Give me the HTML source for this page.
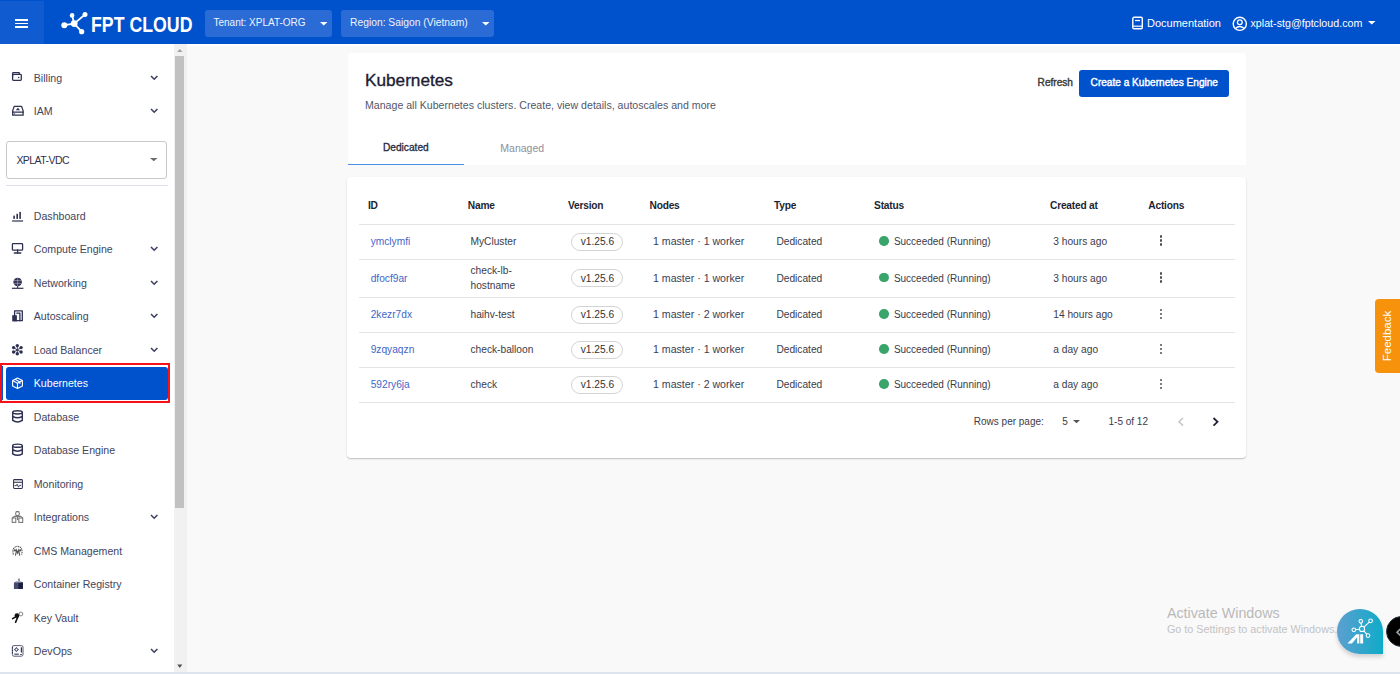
<!DOCTYPE html>
<html><head><meta charset="utf-8">
<style>
*{box-sizing:border-box;margin:0;padding:0}
html,body{width:1400px;height:674px;overflow:hidden;background:#f9f9fa;font-family:"Liberation Sans",sans-serif;position:relative}
.t{position:absolute;line-height:1;white-space:nowrap}
.a{position:absolute}
svg{position:absolute;overflow:visible}
</style></head><body>

<div class="a" style="left:0;top:0;width:1400px;height:44px;background:#0051cc"></div>
<div class="a" style="left:0;top:1px;width:44px;height:43px;background:#115bd0"></div>
<div class="a" style="left:15.1px;top:19.1px;width:13.4px;height:1.45px;background:#fff"></div>
<div class="a" style="left:15.1px;top:22.7px;width:13.4px;height:1.45px;background:#fff"></div>
<div class="a" style="left:15.1px;top:26.3px;width:13.4px;height:1.45px;background:#fff"></div>
<svg style="left:0;top:0" width="100" height="44"><g fill="#fff" stroke="#fff" stroke-width="1.8">
<line x1="74.2" y1="23.6" x2="64.3" y2="25.2"/><line x1="74.2" y1="23.6" x2="72.1" y2="15.4"/>
<line x1="74.2" y1="23.6" x2="85" y2="14.5"/><line x1="74.2" y1="23.6" x2="81.7" y2="31.7"/>
<circle cx="74.2" cy="23.6" r="3.4" stroke="none"/><circle cx="64.3" cy="25.2" r="3" stroke="none"/>
<circle cx="72.1" cy="15.4" r="2.3" stroke="none"/><circle cx="85" cy="14.5" r="2.5" stroke="none"/>
<circle cx="81.7" cy="31.7" r="2.6" stroke="none"/></g></svg>
<div class="t" style="left:90.8px;top:15px;font-size:21.5px;color:#fff;font-weight:bold;transform:scaleX(0.825);transform-origin:0 0;letter-spacing:0">FPT CLOUD</div>
<div class="a" style="left:204.5px;top:9.5px;width:127.5px;height:27.3px;background:#2b6bd6;border-radius:3px"></div>
<div class="t" style="left:213.5px;top:18px;font-size:10px;color:#eef3fc;font-weight:normal;">Tenant: XPLAT-ORG</div>
<svg style="left:319.5px;top:21.5px" width="8" height="4"><path d="M0 0 L7.5 0 L3.75 3.6Z" fill="#fff"/></svg>
<div class="a" style="left:341px;top:9.5px;width:152.5px;height:27.3px;background:#2b6bd6;border-radius:3px"></div>
<div class="t" style="left:350px;top:18px;font-size:10.3px;color:#eef3fc;font-weight:normal;">Region: Saigon (Vietnam)</div>
<svg style="left:481.5px;top:21.5px" width="8" height="4"><path d="M0 0 L7.5 0 L3.75 3.6Z" fill="#fff"/></svg>
<svg style="left:1131px;top:16px" width="14" height="14"><rect x="1.8" y="1.3" width="9.5" height="11.5" rx="1.3" fill="none" stroke="#fff" stroke-width="1.4"/><line x1="4" y1="4.5" x2="9" y2="4.5" stroke="#fff" stroke-width="1.3"/><line x1="1.8" y1="10.2" x2="11.3" y2="10.2" stroke="#fff" stroke-width="1.2"/></svg>
<div class="t" style="left:1147px;top:18px;font-size:11px;color:#fff;font-weight:normal;">Documentation</div>
<svg style="left:1232px;top:15.5px" width="16" height="16"><circle cx="7.8" cy="7.8" r="6.6" fill="none" stroke="#fff" stroke-width="1.4"/><circle cx="7.8" cy="6.2" r="2.4" fill="none" stroke="#fff" stroke-width="1.3"/><path d="M3.6 12.3 Q7.8 8.6 12 12.3" fill="none" stroke="#fff" stroke-width="1.3"/></svg>
<div class="t" style="left:1250.5px;top:18px;font-size:10.7px;color:#fff;font-weight:normal;">xplat-stg@fptcloud.com</div>
<svg style="left:1368px;top:21.3px" width="8" height="4"><path d="M0 0 L7.5 0 L3.75 3.6Z" fill="#fff"/></svg>
<div class="a" style="left:0;top:44px;width:174px;height:630px;background:#fff"></div>
<div class="a" style="left:173.5px;top:44px;width:13.3px;height:630px;background:#f1f1f1"></div>
<div class="a" style="left:175.2px;top:56px;width:9px;height:452px;background:#c1c1c1"></div>
<svg style="left:176px;top:48px" width="8" height="5"><path d="M1 4 L6.6 4 L3.8 1Z" fill="#a3a3a3"/></svg>
<svg style="left:176px;top:663.5px" width="8" height="5"><path d="M1.3 0.5 L6.3 0.5 L3.8 4Z" fill="#505050"/></svg>
<div class="t" style="left:33.8px;top:73px;font-size:10.6px;color:#42455e;font-weight:normal;">Billing</div>
<svg style="left:150.3px;top:74.7px" width="9" height="6"><path d="M1 1 L4.2 4.2 L7.4 1" fill="none" stroke="#3b3e60" stroke-width="1.55"/></svg>
<div class="t" style="left:33.8px;top:106px;font-size:10.6px;color:#42455e;font-weight:normal;">IAM</div>
<svg style="left:150.3px;top:107.9px" width="9" height="6"><path d="M1 1 L4.2 4.2 L7.4 1" fill="none" stroke="#3b3e60" stroke-width="1.55"/></svg>
<div class="a" style="left:6.4px;top:140.6px;width:161px;height:38px;border:1px solid #c9c9c9;border-radius:3px;background:#fff"></div>
<div class="t" style="left:16.4px;top:155px;font-size:10.5px;color:#2e3148;font-weight:normal;letter-spacing:-0.55px">XPLAT-VDC</div>
<svg style="left:150px;top:158px" width="8" height="4"><path d="M0 0 L7.5 0 L3.75 3.2Z" fill="#6b6b6b"/></svg>
<div class="a" style="left:6.4px;top:185px;width:162px;height:1px;background:#dfe0ec"></div>
<div class="t" style="left:33.8px;top:211px;font-size:10.6px;color:#42455e;font-weight:normal;">Dashboard</div>
<div class="t" style="left:33.8px;top:244px;font-size:10.6px;color:#42455e;font-weight:normal;">Compute Engine</div>
<svg style="left:150.3px;top:246.1px" width="9" height="6"><path d="M1 1 L4.2 4.2 L7.4 1" fill="none" stroke="#3b3e60" stroke-width="1.55"/></svg>
<div class="t" style="left:33.8px;top:278px;font-size:10.6px;color:#42455e;font-weight:normal;">Networking</div>
<svg style="left:150.3px;top:279.59999999999997px" width="9" height="6"><path d="M1 1 L4.2 4.2 L7.4 1" fill="none" stroke="#3b3e60" stroke-width="1.55"/></svg>
<div class="t" style="left:33.8px;top:311px;font-size:10.6px;color:#42455e;font-weight:normal;">Autoscaling</div>
<svg style="left:150.3px;top:313.09999999999997px" width="9" height="6"><path d="M1 1 L4.2 4.2 L7.4 1" fill="none" stroke="#3b3e60" stroke-width="1.55"/></svg>
<div class="t" style="left:33.8px;top:345px;font-size:10.6px;color:#42455e;font-weight:normal;">Load Balancer</div>
<svg style="left:150.3px;top:346.59999999999997px" width="9" height="6"><path d="M1 1 L4.2 4.2 L7.4 1" fill="none" stroke="#3b3e60" stroke-width="1.55"/></svg>
<div class="a" style="left:0;top:363px;width:170px;height:40px;border:2px solid #f5121a"></div>
<div class="a" style="left:6px;top:366.5px;width:162px;height:33.5px;background:#0051cc;border-radius:3px"></div>
<div class="a" style="left:2px;top:366px;width:1px;height:34px;background:#0051cc"></div>
<div class="t" style="left:33.8px;top:378px;font-size:10.6px;color:#fff;font-weight:normal;">Kubernetes</div>
<div class="t" style="left:33.8px;top:412px;font-size:10.6px;color:#42455e;font-weight:normal;">Database</div>
<div class="t" style="left:33.8px;top:445px;font-size:10.6px;color:#42455e;font-weight:normal;">Database Engine</div>
<div class="t" style="left:33.8px;top:479px;font-size:10.6px;color:#42455e;font-weight:normal;">Monitoring</div>
<div class="t" style="left:33.8px;top:512px;font-size:10.6px;color:#42455e;font-weight:normal;">Integrations</div>
<svg style="left:150.3px;top:514.1px" width="9" height="6"><path d="M1 1 L4.2 4.2 L7.4 1" fill="none" stroke="#3b3e60" stroke-width="1.55"/></svg>
<div class="t" style="left:33.8px;top:546px;font-size:10.6px;color:#42455e;font-weight:normal;">CMS Management</div>
<div class="t" style="left:33.8px;top:579px;font-size:10.6px;color:#42455e;font-weight:normal;">Container Registry</div>
<div class="t" style="left:33.8px;top:613px;font-size:10.6px;color:#42455e;font-weight:normal;">Key Vault</div>
<div class="t" style="left:33.8px;top:646px;font-size:10.6px;color:#42455e;font-weight:normal;">DevOps</div>
<svg style="left:150.3px;top:648.1px" width="9" height="6"><path d="M1 1 L4.2 4.2 L7.4 1" fill="none" stroke="#3b3e60" stroke-width="1.55"/></svg>
<svg style="left:0;top:0" width="174" height="674"><g fill="none" stroke="#2e3152" stroke-width="1.3" stroke-linejoin="round" stroke-linecap="round">
<rect x="12.6" y="74.4" width="8.7" height="6" rx="0.8"/>
<path d="M12.6 76.2 V73.4 Q12.6 72.6 13.4 72.6 H19.2 V74.4"/>
<path d="M12.7 115.2 V110.6 L14.2 106.4 H21.6 L23.1 110.6 V115.2Z"/><line x1="12.7" y1="112.2" x2="23.1" y2="112.2"/>
<rect x="12.4" y="243.6" width="10.2" height="6.6" rx="0.8"/><line x1="14.3" y1="253" x2="20.8" y2="253"/><line x1="17.6" y1="250" x2="17.6" y2="253"/>
<rect x="14.6" y="310.8" width="7.7" height="9.9"/><path d="M16.8 313.2 H19.9 V320.7"/>
<rect x="13.6" y="479.6" width="8.8" height="8.8" rx="0.8" stroke-width="1.05"/><line x1="13.6" y1="482.3" x2="22.4" y2="482.3" stroke-width="1"/><line x1="14.8" y1="480.9" x2="21.2" y2="480.9" stroke-width="0.9" stroke="#b4b6c4"/><path d="M15 485.6 H16.4 L17.1 484.2 L18.5 487.2 L19.4 485.4 H20.8" stroke-width="0.9"/>
<path d="M12.6 380.6 L17.5 378 L22.4 380.6 V385.9 L17.5 388.5 L12.6 385.9Z M12.6 380.6 L17.5 383.2 L22.4 380.6 M17.5 383.2 V388.5 M15 379.3 L19.9 381.9 V383.5" stroke="#fff" stroke-width="1.15"/>
</g>
<g fill="#2e3152" stroke="none">
<circle cx="18.7" cy="77.4" r="0.75"/>
<path d="M15.8 110.2 L17.9 107.8 L20 110.2Z"/><circle cx="14.6" cy="113.8" r="0.6"/>
<rect x="13.3" y="215.6" width="1.6" height="3.3"/><rect x="16.4" y="213.8" width="1.6" height="5.1"/><rect x="19.3" y="211.9" width="1.6" height="7"/><rect x="12.1" y="220.4" width="11" height="1.2"/>
<circle cx="17.65" cy="282" r="4.3"/><rect x="17.1" y="286" width="1.1" height="2.2"/><g stroke="#fff" stroke-width="0.45" fill="none" opacity="0.85"><line x1="13.6" y1="280.6" x2="21.7" y2="280.6"/><line x1="13.6" y1="283.4" x2="21.7" y2="283.4"/><line x1="17.65" y1="277.9" x2="17.65" y2="286.1"/></g><rect x="11.9" y="287.7" width="11.5" height="1.2"/>
<rect x="12.2" y="315.2" width="4.7" height="6.2"/>
<g stroke="#2e3152" stroke-width="0.9"><line x1="17.3" y1="350" x2="17.3" y2="345.4"/><line x1="17.3" y1="350" x2="13.8" y2="347.7"/><line x1="17.3" y1="350" x2="21.1" y2="347.7"/><line x1="17.3" y1="350" x2="13.8" y2="352"/><line x1="17.3" y1="350" x2="21.1" y2="352"/><line x1="17.3" y1="350" x2="17.3" y2="353.7"/></g>
<circle cx="17.3" cy="345.6" r="1.7"/><circle cx="13.6" cy="347.6" r="1.7"/><circle cx="21.1" cy="347.6" r="1.7"/><circle cx="13.6" cy="352" r="1.7"/><circle cx="21.1" cy="352" r="1.7"/><circle cx="17.3" cy="353.8" r="1.7"/>
<path d="M13.9 588.9 V582.8 L16.2 581.5 H20.6 L22.9 582.8 V588.9Z" fill="#474b6d"/><path d="M18.4 582.3 H22.9 V588.9 H18.4Z" fill="#1b1e42"/><rect x="18.1" y="578.5" width="1.8" height="2.6" fill="#8a8ca4"/><line x1="15.5" y1="582" x2="21.4" y2="582" stroke="#c9cad6" stroke-width="0.8"/>
</g>
<g fill="none" stroke="#2e3152" stroke-width="1.45">
<ellipse cx="17.5" cy="412.3" rx="4.8" ry="1.6"/><path d="M12.7 412.3 V420.4 Q17.5 423.5 22.3 420.4 V412.3 M12.7 416.3 Q17.5 419.4 22.3 416.3"/>
<ellipse cx="17.5" cy="445.7" rx="4.8" ry="1.6"/><path d="M12.7 445.7 V453.8 Q17.5 456.9 22.3 453.8 V445.7 M12.7 449.7 Q17.5 452.8 22.3 449.7"/>
</g>
<g fill="none" stroke="#7a7a7a" stroke-width="1.1">
<path d="M15.6 513.6 L16.3 511.6 H18.7 L19.4 513.6 L18.8 515.6 H16.2Z"/><rect x="12.2" y="518" width="3.6" height="4.4"/><rect x="18.8" y="518" width="3.9" height="4.4"/><path d="M12.2 518 L14.5 516.4 H20.5 L22.7 518"/><line x1="17.5" y1="516.4" x2="17.5" y2="520"/>
</g>
<g fill="none" stroke="#555" stroke-width="1.1">
<path d="M13.4 554.6 Q12 549.4 14.6 547.4 Q17.5 545.2 20.4 547.4 Q23 549.4 21.6 554.6" stroke-dasharray="1.3 0.6"/><path d="M15.4 555.6 L16.6 550.2 L17.6 553 L18.6 550.2 L19.8 555.6"/><circle cx="14.9" cy="550.4" r="0.6" fill="#555"/><circle cx="20.2" cy="550.4" r="0.6" fill="#555"/>
</g>
<g fill="#111" stroke="#111">
<circle cx="17" cy="615.6" r="2.4" stroke="none"/><circle cx="20.9" cy="614" r="1.9" fill="none" stroke="#777" stroke-width="0.9"/>
<line x1="16" y1="616.8" x2="12.6" y2="618.6" stroke-width="1.6" stroke-linecap="round"/><line x1="17.6" y1="617.4" x2="15.6" y2="622.2" stroke-width="1.6" stroke-linecap="round"/>
</g>
<g fill="none" stroke="#5a5d78" stroke-width="1"><rect x="12.4" y="645.6" width="10.6" height="10.6" rx="1.6"/></g>
<g fill="#2e3152" stroke="none">
<rect x="11.9" y="647.2" width="1.1" height="1.3"/><rect x="11.9" y="649.8" width="1.1" height="1.3"/><rect x="11.9" y="652" width="1.1" height="1.3"/>
<rect x="20.8" y="647.3" width="1.2" height="5.2"/><rect x="14.3" y="653.6" width="4.5" height="1.1"/><rect x="20.2" y="654" width="1.7" height="0.9"/>
</g>
<g fill="none" stroke="#2e3152" stroke-width="1"><circle cx="16.4" cy="649.6" r="1.4"/><path d="M16.4 647.2 V647.9 M16.4 651.3 V652 M14 649.6 H14.7 M18.1 649.6 H18.8" stroke-width="0.9"/></g>
</svg>
<div class="a" style="left:187px;top:44px;width:1213px;height:1.5px;background:#fff"></div>
<div class="a" style="left:347.5px;top:52.5px;width:898.5px;height:112.5px;background:#fff;border-radius:4px 4px 0 0"></div>
<div class="t" style="left:365px;top:72px;font-size:17.2px;color:#1b1d33;font-weight:normal;-webkit-text-stroke:0.35px #1b1d33">Kubernetes</div>
<div class="t" style="left:365px;top:100px;font-size:10.6px;color:#535669;font-weight:normal;">Manage all Kubernetes clusters. Create, view details, autoscales and more</div>
<div class="t" style="left:382.9px;top:143px;font-size:10.2px;color:#262a40;font-weight:normal;-webkit-text-stroke:0.3px #262a40">Dedicated</div>
<div class="t" style="left:500.3px;top:143px;font-size:10.5px;color:#8d8f9c;font-weight:normal;">Managed</div>
<div class="a" style="left:347.7px;top:163.6px;width:116px;height:1.8px;background:#4b8fe8"></div>
<div class="t" style="left:1037.6px;top:78px;font-size:10.1px;color:#3a3a3a;font-weight:normal;-webkit-text-stroke:0.4px #3a3a3a">Refresh</div>
<div class="a" style="left:1079px;top:70px;width:150px;height:27px;background:#0051cc;border-radius:3px"></div>
<div class="t" style="left:1090.6px;top:78px;font-size:10.1px;color:#fff;font-weight:normal;-webkit-text-stroke:0.4px #fff">Create a Kubernetes Engine</div>
<div class="a" style="left:347px;top:177px;width:899px;height:281px;background:#fff;border-radius:4px;box-shadow:0 1px 1.5px rgba(0,0,0,.24)"></div>
<div class="t" style="left:367.9px;top:201px;font-size:10.2px;color:#1d1f33;font-weight:bold;letter-spacing:-0.22px">ID</div>
<div class="t" style="left:467.8px;top:201px;font-size:10.2px;color:#1d1f33;font-weight:bold;letter-spacing:-0.22px">Name</div>
<div class="t" style="left:568px;top:201px;font-size:10.2px;color:#1d1f33;font-weight:bold;letter-spacing:-0.22px">Version</div>
<div class="t" style="left:649.5px;top:201px;font-size:10.2px;color:#1d1f33;font-weight:bold;letter-spacing:-0.22px">Nodes</div>
<div class="t" style="left:774px;top:201px;font-size:10.2px;color:#1d1f33;font-weight:bold;letter-spacing:-0.22px">Type</div>
<div class="t" style="left:874.1px;top:201px;font-size:10.2px;color:#1d1f33;font-weight:bold;letter-spacing:-0.22px">Status</div>
<div class="t" style="left:1050px;top:201px;font-size:10.2px;color:#1d1f33;font-weight:bold;letter-spacing:-0.22px">Created at</div>
<div class="t" style="left:1148.3px;top:201px;font-size:10.2px;color:#1d1f33;font-weight:bold;letter-spacing:-0.22px">Actions</div>
<div class="a" style="left:359px;top:223.5px;width:876px;height:1px;background:#e4e4e4"></div>
<div class="a" style="left:359px;top:258.5px;width:876px;height:1px;background:#e4e4e4"></div>
<div class="a" style="left:359px;top:297.0px;width:876px;height:1px;background:#e4e4e4"></div>
<div class="a" style="left:359px;top:332.0px;width:876px;height:1px;background:#e4e4e4"></div>
<div class="a" style="left:359px;top:367.0px;width:876px;height:1px;background:#e4e4e4"></div>
<div class="a" style="left:359px;top:401.8px;width:876px;height:1px;background:#e4e4e4"></div>
<div class="t" style="left:370.7px;top:237px;font-size:10.2px;color:#3f66c9;font-weight:normal;">ymclymfi</div>
<div class="t" style="left:470.5px;top:237px;font-size:10.2px;color:#3a3c4a;font-weight:normal;">MyCluster</div>
<div class="a" style="left:571px;top:232.5px;width:52px;height:18px;border:1px solid #d4d4d4;border-radius:9px;background:#fff"></div>
<div class="t" style="left:580.7px;top:237px;font-size:10.2px;color:#333;font-weight:normal;">v1.25.6</div>
<div class="t" style="left:653px;top:236px;font-size:10.6px;color:#3b3e55;font-weight:normal;">1 master · 1 worker</div>
<div class="t" style="left:776.4px;top:237px;font-size:10.2px;color:#3a3c4a;font-weight:normal;">Dedicated</div>
<div class="a" style="left:879px;top:236.3px;width:9.5px;height:9.5px;border-radius:50%;background:#3aa56b"></div>
<div class="t" style="left:893.9px;top:237px;font-size:10px;color:#3a3c4a;font-weight:normal;">Succeeded (Running)</div>
<div class="t" style="left:1053.3px;top:237px;font-size:10.2px;color:#3a3c4a;font-weight:normal;">3 hours ago</div>
<div class="a" style="left:1159.5px;top:235.4px;width:2.8px;height:2.8px;border-radius:50%;background:#505050"></div>
<div class="a" style="left:1159.5px;top:239.4px;width:2.8px;height:2.8px;border-radius:50%;background:#505050"></div>
<div class="a" style="left:1159.5px;top:243.4px;width:2.8px;height:2.8px;border-radius:50%;background:#505050"></div>
<div class="t" style="left:370.7px;top:274px;font-size:10.2px;color:#3f66c9;font-weight:normal;">dfocf9ar</div>
<div class="t" style="left:470.5px;top:266px;font-size:10.2px;color:#3a3c4a;font-weight:normal;">check-lb-</div>
<div class="t" style="left:470.5px;top:281px;font-size:10.2px;color:#3a3c4a;font-weight:normal;">hostname</div>
<div class="a" style="left:571px;top:269.1px;width:52px;height:18px;border:1px solid #d4d4d4;border-radius:9px;background:#fff"></div>
<div class="t" style="left:580.7px;top:274px;font-size:10.2px;color:#333;font-weight:normal;">v1.25.6</div>
<div class="t" style="left:653px;top:273px;font-size:10.6px;color:#3b3e55;font-weight:normal;">1 master · 1 worker</div>
<div class="t" style="left:776.4px;top:274px;font-size:10.2px;color:#3a3c4a;font-weight:normal;">Dedicated</div>
<div class="a" style="left:879px;top:272.9px;width:9.5px;height:9.5px;border-radius:50%;background:#3aa56b"></div>
<div class="t" style="left:893.9px;top:274px;font-size:10px;color:#3a3c4a;font-weight:normal;">Succeeded (Running)</div>
<div class="t" style="left:1053.3px;top:274px;font-size:10.2px;color:#3a3c4a;font-weight:normal;">3 hours ago</div>
<div class="a" style="left:1159.5px;top:272.0px;width:2.8px;height:2.8px;border-radius:50%;background:#505050"></div>
<div class="a" style="left:1159.5px;top:276.0px;width:2.8px;height:2.8px;border-radius:50%;background:#505050"></div>
<div class="a" style="left:1159.5px;top:280.0px;width:2.8px;height:2.8px;border-radius:50%;background:#505050"></div>
<div class="t" style="left:370.7px;top:310px;font-size:10.2px;color:#3f66c9;font-weight:normal;">2kezr7dx</div>
<div class="t" style="left:470.5px;top:310px;font-size:10.2px;color:#3a3c4a;font-weight:normal;">haihv-test</div>
<div class="a" style="left:571px;top:305.6px;width:52px;height:18px;border:1px solid #d4d4d4;border-radius:9px;background:#fff"></div>
<div class="t" style="left:580.7px;top:310px;font-size:10.2px;color:#333;font-weight:normal;">v1.25.6</div>
<div class="t" style="left:653px;top:309px;font-size:10.6px;color:#3b3e55;font-weight:normal;">1 master · 2 worker</div>
<div class="t" style="left:776.4px;top:310px;font-size:10.2px;color:#3a3c4a;font-weight:normal;">Dedicated</div>
<div class="a" style="left:879px;top:309.4px;width:9.5px;height:9.5px;border-radius:50%;background:#3aa56b"></div>
<div class="t" style="left:893.9px;top:310px;font-size:10px;color:#3a3c4a;font-weight:normal;">Succeeded (Running)</div>
<div class="t" style="left:1053.3px;top:310px;font-size:10.2px;color:#3a3c4a;font-weight:normal;">14 hours ago</div>
<div class="a" style="left:1159.5px;top:308.5px;width:2.8px;height:2.8px;border-radius:50%;background:#505050"></div>
<div class="a" style="left:1159.5px;top:312.5px;width:2.8px;height:2.8px;border-radius:50%;background:#505050"></div>
<div class="a" style="left:1159.5px;top:316.5px;width:2.8px;height:2.8px;border-radius:50%;background:#505050"></div>
<div class="t" style="left:370.7px;top:345px;font-size:10.2px;color:#3f66c9;font-weight:normal;">9zqyaqzn</div>
<div class="t" style="left:470.5px;top:345px;font-size:10.2px;color:#3a3c4a;font-weight:normal;">check-balloon</div>
<div class="a" style="left:571px;top:340.6px;width:52px;height:18px;border:1px solid #d4d4d4;border-radius:9px;background:#fff"></div>
<div class="t" style="left:580.7px;top:345px;font-size:10.2px;color:#333;font-weight:normal;">v1.25.6</div>
<div class="t" style="left:653px;top:344px;font-size:10.6px;color:#3b3e55;font-weight:normal;">1 master · 1 worker</div>
<div class="t" style="left:776.4px;top:345px;font-size:10.2px;color:#3a3c4a;font-weight:normal;">Dedicated</div>
<div class="a" style="left:879px;top:344.4px;width:9.5px;height:9.5px;border-radius:50%;background:#3aa56b"></div>
<div class="t" style="left:893.9px;top:345px;font-size:10px;color:#3a3c4a;font-weight:normal;">Succeeded (Running)</div>
<div class="t" style="left:1053.3px;top:345px;font-size:10.2px;color:#3a3c4a;font-weight:normal;">a day ago</div>
<div class="a" style="left:1159.5px;top:343.5px;width:2.8px;height:2.8px;border-radius:50%;background:#505050"></div>
<div class="a" style="left:1159.5px;top:347.5px;width:2.8px;height:2.8px;border-radius:50%;background:#505050"></div>
<div class="a" style="left:1159.5px;top:351.5px;width:2.8px;height:2.8px;border-radius:50%;background:#505050"></div>
<div class="t" style="left:370.7px;top:380px;font-size:10.2px;color:#3f66c9;font-weight:normal;">592ry6ja</div>
<div class="t" style="left:470.5px;top:380px;font-size:10.2px;color:#3a3c4a;font-weight:normal;">check</div>
<div class="a" style="left:571px;top:375.6px;width:52px;height:18px;border:1px solid #d4d4d4;border-radius:9px;background:#fff"></div>
<div class="t" style="left:580.7px;top:380px;font-size:10.2px;color:#333;font-weight:normal;">v1.25.6</div>
<div class="t" style="left:653px;top:379px;font-size:10.6px;color:#3b3e55;font-weight:normal;">1 master · 2 worker</div>
<div class="t" style="left:776.4px;top:380px;font-size:10.2px;color:#3a3c4a;font-weight:normal;">Dedicated</div>
<div class="a" style="left:879px;top:379.4px;width:9.5px;height:9.5px;border-radius:50%;background:#3aa56b"></div>
<div class="t" style="left:893.9px;top:380px;font-size:10px;color:#3a3c4a;font-weight:normal;">Succeeded (Running)</div>
<div class="t" style="left:1053.3px;top:380px;font-size:10.2px;color:#3a3c4a;font-weight:normal;">a day ago</div>
<div class="a" style="left:1159.5px;top:378.5px;width:2.8px;height:2.8px;border-radius:50%;background:#505050"></div>
<div class="a" style="left:1159.5px;top:382.5px;width:2.8px;height:2.8px;border-radius:50%;background:#505050"></div>
<div class="a" style="left:1159.5px;top:386.5px;width:2.8px;height:2.8px;border-radius:50%;background:#505050"></div>
<div class="t" style="left:973.8px;top:417px;font-size:10px;color:#3a3c4a;font-weight:normal;">Rows per page:</div>
<div class="t" style="left:1062.3px;top:417px;font-size:10px;color:#3a3c4a;font-weight:normal;">5</div>
<svg style="left:1072.5px;top:420px" width="8" height="4"><path d="M0 0 L7 0 L3.5 3.3Z" fill="#555"/></svg>
<div class="t" style="left:1108.5px;top:417px;font-size:10px;color:#3a3c4a;font-weight:normal;">1-5 of 12</div>
<svg style="left:1177px;top:416.5px" width="8" height="10"><path d="M6 1 L2 4.8 L6 8.6" fill="none" stroke="#c4c4c4" stroke-width="1.5"/></svg>
<svg style="left:1211.5px;top:416.5px" width="8" height="10"><path d="M1.5 1 L5.5 4.8 L1.5 8.6" fill="none" stroke="#1f2233" stroke-width="1.8"/></svg>
<div class="a" style="left:1374.7px;top:299.3px;width:30px;height:73.4px;background:#f7920d;border-radius:4px 0 0 4px"></div>
<div class="t" style="left:1387.6px;top:335.8px;font-size:11.5px;color:#fff;transform:translate(-50%,-50%) rotate(-90deg)">Feedback</div>
<div class="t" style="left:1166.9px;top:606px;font-size:14.3px;color:#b9b9b9;font-weight:normal;">Activate Windows</div>
<div class="t" style="left:1166.9px;top:624px;font-size:10.8px;color:#c3c3c3;font-weight:normal;">Go to Settings to activate Windows.</div>
<div class="a" style="left:1337.4px;top:608.9px;width:45.5px;height:44.8px;border-radius:50% 50% 0 50%;background:linear-gradient(90deg,#5d9fd0,#0fabc8);box-shadow:0 3px 4px rgba(0,0,0,.16)"></div>
<svg style="left:1337px;top:608px" width="50" height="50"><g fill="none" stroke="#fff" stroke-width="1.05">
<line x1="25" y1="20.9" x2="23.8" y2="13.5"/><line x1="25" y1="20.9" x2="33.6" y2="12.9"/><line x1="25" y1="20.9" x2="17" y2="21.8"/><line x1="25" y1="20.9" x2="30.9" y2="27.4"/>
<circle cx="25" cy="20.9" r="2.6" fill="#2cb0cf"/><circle cx="23.8" cy="13.3" r="1.8" fill="#40b0d5"/><circle cx="33.6" cy="12.8" r="1.85" fill="#1caccb"/><circle cx="16.8" cy="21.8" r="1.85" fill="#44a9d6"/><circle cx="31" cy="27.6" r="1.85" fill="#1caccb"/>
</g><g fill="#fff"><path d="M10.4 35.5 L14.9 35.5 L20.2 29.2 V35.5 H22.3 V26.3 H19.2Z"/><rect x="23.2" y="26.3" width="2.9" height="9.2"/></g></svg>
<div class="a" style="left:1385.6px;top:615.8px;width:31px;height:31px;border-radius:50%;background:#000;border:1.3px solid #2c3440"></div>
<svg style="left:1394px;top:626px" width="8" height="14"><path d="M6.8 2.6 L3 6.2 L6.8 9.8" fill="none" stroke="#9aa0a8" stroke-width="1.6"/></svg>
<div class="a" style="left:0;top:672px;width:1400px;height:2px;background:#dde4ee"></div>
</body></html>
